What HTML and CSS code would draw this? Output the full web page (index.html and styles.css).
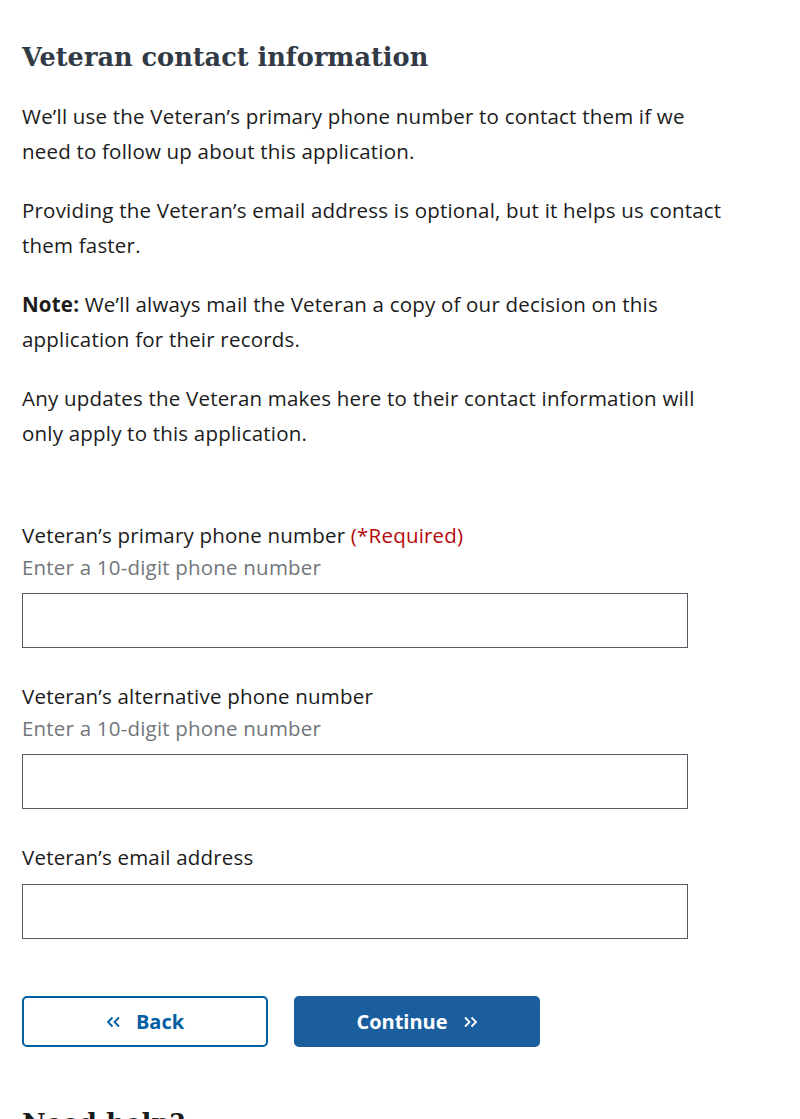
FILE: index.html
```html
<!DOCTYPE html>
<html lang="en">
<head>
<meta charset="utf-8">
<title>Veteran contact information</title>
<link rel="stylesheet" href="styles.css">
</head>
<body>
<main class="page">
  <h1 class="title">Veteran contact information</h1>
  <p class="para">We’ll use the Veteran’s primary phone number to contact them if we need to follow up about this application.</p>
  <p class="para">Providing the Veteran’s email address is optional, but it helps us contact them faster.</p>
  <p class="para"><strong>Note:</strong> We’ll always mail the Veteran a copy of our decision on this application for their records.</p>
  <p class="para">Any updates the Veteran makes here to their contact information will only apply to this application.</p>

  <form class="form">
    <div class="field">
      <label class="label" for="primary">Veteran’s primary phone number <span class="req">(*Required)</span></label>
      <div class="hint">Enter a 10-digit phone number</div>
      <input class="input" id="primary" type="tel">
    </div>
    <div class="field">
      <label class="label" for="alt">Veteran’s alternative phone number</label>
      <div class="hint">Enter a 10-digit phone number</div>
      <input class="input" id="alt" type="tel">
    </div>
    <div class="field field-nohint">
      <label class="label" for="email">Veteran’s email address</label>
      <input class="input" id="email" type="email">
    </div>
    <div class="actions">
      <button type="button" class="btn btn-outline">
        <svg class="chev" width="16" height="12" viewBox="0 0 16 12" aria-hidden="true"><path d="M6.5 1.5 L2 6 L6.5 10.5 M13 1.5 L8.5 6 L13 10.5" fill="none" stroke="currentColor" stroke-width="1.8"/></svg>
        <span>Back</span>
      </button>
      <button type="button" class="btn btn-primary">
        <span>Continue</span>
        <svg class="chev" width="16" height="12" viewBox="0 0 16 12" aria-hidden="true"><path d="M3 1.5 L7.5 6 L3 10.5 M9.5 1.5 L14 6 L9.5 10.5" fill="none" stroke="currentColor" stroke-width="1.8"/></svg>
      </button>
    </div>
  </form>
  <h2 class="help">Need help?</h2>
</main>
</body>
</html>
```
FILE: styles.css
```css
html, body {
  margin: 0;
  padding: 0;
  background: #ffffff;
}
body {
  font-family: "Open Sans", "Liberation Sans", sans-serif;
  color: #1b1b1b;
}
.page {
  padding: 39px 22px 0 22px;
}
.title {
  font-family: "DejaVu Serif", "Liberation Serif", serif;
  font-weight: bold;
  font-size: 25.6px;
  line-height: 36px;
  color: #323a45;
  margin: 0 0 24px 0;
}
.para {
  font-size: 20.5px;
  letter-spacing: 0.2px;
  line-height: 35px;
  margin: 0 0 24px 0;
  max-width: 705px;
}
.para strong {
  font-weight: bold;
}
.form {
  margin-top: 68px;
}
.field {
  margin-bottom: 32px;
}
.label {
  display: block;
  font-size: 20.5px;
  letter-spacing: 0.2px;
  line-height: 32px;
  color: #1b1b1b;
}
.req {
  color: #b50909;
}
.hint {
  font-size: 20.5px;
  letter-spacing: 0.2px;
  line-height: 32px;
  color: #71767a;
}
.input {
  display: block;
  box-sizing: border-box;
  width: 666px;
  height: 55px;
  margin: 10px 0 0 0;
  border: 1px solid #565c65;
  border-radius: 0;
  background: #fff;
  font: inherit;
}
.field-nohint .input {
  margin-top: 11px;
}
.actions {
  display: flex;
  gap: 26px;
  margin-top: 57px;
}
.btn {
  box-sizing: border-box;
  width: 246px;
  height: 51px;
  border-radius: 5px;
  font-family: "Open Sans", "Liberation Sans", sans-serif;
  font-weight: bold;
  font-size: 20px;
  display: flex;
  align-items: center;
  justify-content: center;
  gap: 14px;
  cursor: pointer;
}
.btn-outline {
  background: #fff;
  color: #005ea2;
  border: 2px solid #005ea2;
}
.btn-primary {
  background: #1a5e9e;
  color: #fff;
  border: 0;
}
.chev {
  display: block;
}
.help {
  font-family: "DejaVu Serif", "Liberation Serif", serif;
  font-weight: bold;
  font-size: 26px;
  line-height: 36px;
  color: #1b1b1b;
  margin: 58px 0 0 0;
}
```
